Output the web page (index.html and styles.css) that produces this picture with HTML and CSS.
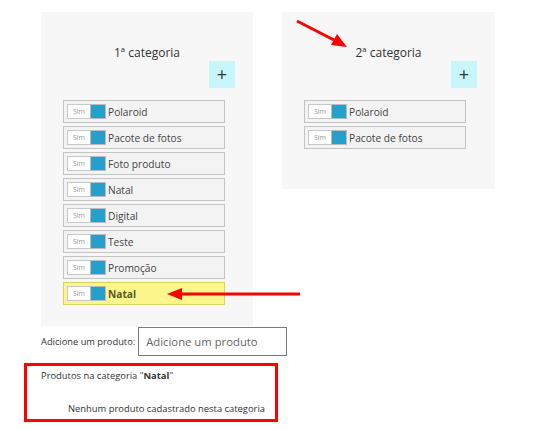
FILE: index.html
```html
<!DOCTYPE html>
<html lang="pt">
<head>
    <meta charset="UTF-8">
    <title>Categorias</title>
    <link rel="stylesheet" href="styles.css">
</head>
<body>
    <div class="page">
        <div class="columns">
            <div class="panel">
                <h2 class="panel-title">1ª categoria</h2>
                <div class="panel-tools">
                    <button class="add-button">+</button>
                </div>
                <ul class="item-list">
                    <li class="item"><span class="toggle"><span class="toggle-label">Sim</span><span class="toggle-knob"></span></span>Polaroid</li>
                    <li class="item"><span class="toggle"><span class="toggle-label">Sim</span><span class="toggle-knob"></span></span>Pacote de fotos</li>
                    <li class="item"><span class="toggle"><span class="toggle-label">Sim</span><span class="toggle-knob"></span></span>Foto produto</li>
                    <li class="item"><span class="toggle"><span class="toggle-label">Sim</span><span class="toggle-knob"></span></span>Natal</li>
                    <li class="item"><span class="toggle"><span class="toggle-label">Sim</span><span class="toggle-knob"></span></span>Digital</li>
                    <li class="item"><span class="toggle"><span class="toggle-label">Sim</span><span class="toggle-knob"></span></span>Teste</li>
                    <li class="item"><span class="toggle"><span class="toggle-label">Sim</span><span class="toggle-knob"></span></span>Promoção</li>
                    <li class="item item-selected"><span class="toggle"><span class="toggle-label">Sim</span><span class="toggle-knob"></span></span>Natal</li>
                </ul>
            </div>

            <div class="panel panel-short">
                <h2 class="panel-title">2ª categoria</h2>
                <div class="panel-tools">
                    <button class="add-button">+</button>
                </div>
                <ul class="item-list">
                    <li class="item"><span class="toggle"><span class="toggle-label">Sim</span><span class="toggle-knob"></span></span>Polaroid</li>
                    <li class="item"><span class="toggle"><span class="toggle-label">Sim</span><span class="toggle-knob"></span></span>Pacote de fotos</li>
                </ul>
            </div>
        </div>

        <div class="add-product">
            <label class="add-label" for="produto">Adicione um produto:</label>
            <input class="add-input" id="produto" type="text" placeholder="Adicione um produto">
        </div>

        <div class="products-box">
            <p class="products-title">Produtos na categoria "<b>Natal</b>"</p>
            <p class="products-empty">Nenhum produto cadastrado nesta categoria</p>
        </div>
    </div>

    <!-- annotation arrows -->
    <svg class="arrows" width="537" height="430" viewBox="0 0 537 430">
        <line x1="297" y1="21" x2="334" y2="40" stroke="#f00" stroke-width="3"/>
        <polygon points="347,47 331,45 337,34" fill="#f00"/>
        <line x1="300" y1="294" x2="180" y2="294" stroke="#f00" stroke-width="3"/>
        <polygon points="167,294 182,288 182,300" fill="#f00"/>
    </svg>
</body>
</html>
```

FILE: styles.css
```css
body {
    margin: 0;
    font-family: "Open Sans", Arial, sans-serif;
    color: #333;
    background: #fff;
}
.page {
    padding: 12px 0 0 41px;
}
.columns {
    display: flex;
    align-items: flex-start;
    gap: 29px;
}
.panel {
    width: 212px;
    background-color: #f7f7f7;
    padding: 0 0 21px 0;
    box-sizing: border-box;
}
.panel-short {
    width: 213px;
    min-height: 177px;
}
.panel-title {
    margin: 0;
    padding-top: 32px;
    height: 17px;
    line-height: 17px;
    font-size: 12px;
    font-weight: normal;
    text-align: center;
    color: #333;
}
.panel-tools {
    display: flex;
    justify-content: flex-end;
    padding: 0 18px 0 0;
}
.add-button {
    width: 26px;
    height: 27px;
    border: none;
    background-color: #c6f6fa;
    color: #333;
    font-family: "Open Sans", Arial, sans-serif;
    font-size: 18px;
    line-height: 27px;
    padding: 0;
    cursor: pointer;
}
.item-list {
    list-style: none;
    margin: 12px 0 0 22px;
    padding: 0;
    width: 162px;
}
.item {
    display: flex;
    align-items: center;
    height: 23px;
    box-sizing: border-box;
    margin-bottom: 3px;
    padding-left: 3px;
    border: 1px solid #c4c4c4;
    background-color: #f3f3f3;
    font-size: 10.2px;
    color: #444;
}
.item:last-child {
    margin-bottom: 0;
}
.item-selected {
    background-color: #fdf68c;
    border-color: #d8d45a;
    color: #5b5a2a;
    font-weight: bold;
}
.toggle {
    display: flex;
    height: 15px;
    margin-right: 2px;
}
.toggle-label {
    width: 23px;
    border: 1px solid #c8c8c8;
    border-right: none;
    background: #fff;
    font-size: 7px;
    font-weight: normal;
    line-height: 13px;
    text-align: center;
    color: #999;
    box-sizing: border-box;
}
.toggle-knob {
    width: 16px;
    background-color: #25a0cb;
    border: 1px solid #bcbcbc;
    box-sizing: border-box;
}
.add-product {
    display: flex;
    align-items: center;
    margin-top: 1px;
}
.add-label {
    font-size: 9.3px;
    color: #333;
    margin-right: 3px;
}
.add-input {
    width: 149px;
    height: 29px;
    box-sizing: border-box;
    border: 1px solid #7b7b7b;
    padding: 0 7px;
    font-family: "Open Sans", Arial, sans-serif;
    font-size: 11.3px;
}
.add-input::placeholder {
    color: #666;
}
.products-box {
    width: 254px;
    height: 59px;
    box-sizing: border-box;
    margin: 7px 0 0 -17px;
    border: 3px solid #f00;
    padding: 3px 0 0 14px;
    font-size: 9.4px;
    color: #333;
    white-space: nowrap;
}
.products-title {
    margin: 0;
    line-height: 14px;
}
.products-empty {
    margin: 19px 0 0 27px;
    line-height: 14px;
}
.arrows {
    position: absolute;
    top: 0;
    left: 0;
    pointer-events: none;
}
```
